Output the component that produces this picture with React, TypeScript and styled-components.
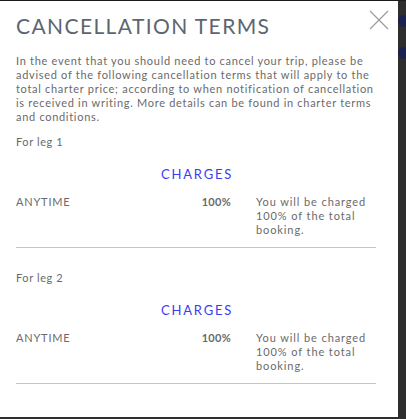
import * as React from 'react';
import { createGlobalStyle, styled } from 'styled-components';

const GlobalStyle = createGlobalStyle`
  html, body {
    margin: 0;
    padding: 0;
    background: #2c2c2c;
    font-family: Lato, "Noto Sans", sans-serif;
  }
`;

const Backdrop = styled.div`
  position: relative;
  width: 406px;
  height: 419px;
  overflow: hidden;
  background: #2e2e2e;
  border-top: 1px solid #1e1a18;
  box-sizing: border-box;
`;

const SideButton = styled.span<{ $top: number }>`
  position: absolute;
  left: 398px;
  top: ${(p) => p.$top}px;
  width: 10px;
  height: 12px;
  border-radius: 50%;
  background: #1a2250;
`;

const Modal = styled.div`
  position: relative;
  width: 398px;
  height: 416px;
  background: #ffffff;
  box-sizing: border-box;
  padding: 12px 22px 0 16px;
  color: #6a6a6a;
`;

const Title = styled.h1`
  margin: 0;
  font-size: 21px;
  font-weight: 400;
  letter-spacing: 1.4px;
  line-height: 26px;
  color: #5d6670;
`;

const CloseButton = styled.button`
  position: absolute;
  top: 9px;
  right: 9px;
  width: 20px;
  height: 20px;
  padding: 0;
  border: none;
  background: transparent;
  cursor: pointer;
`;

const Intro = styled.p`
  margin: 15px 0 0;
  font-size: 11px;
  line-height: 14px;
  letter-spacing: 0.7px;
  color: #6a6a6a;
`;

const Leg = styled.section`
  margin-top: 11px;
  & + & {
    margin-top: 23px;
  }
`;

const LegLabel = styled.div`
  font-size: 11px;
  line-height: 14px;
  letter-spacing: 0.6px;
  color: #6a6a6a;
`;

const Table = styled.div`
  display: grid;
  grid-template-columns: 120px 70px 120px;
  column-gap: 25px;
  margin-top: 17px;
  padding-bottom: 10px;
  border-bottom: 1.5px solid #c4c4c4;
`;

const Charges = styled.div`
  grid-column: 2;
  text-align: right;
  white-space: nowrap;
  font-size: 13px;
  line-height: 16px;
  letter-spacing: 1.8px;
  margin-right: -1.8px;
  color: #3b3bf0;
  margin-bottom: 13px;
`;

const Cell = styled.div<{ $col?: number; $align?: 'left' | 'right'; $bold?: boolean; $spacing?: number }>`
  grid-column: ${(p) => p.$col ?? 'auto'};
  font-size: 11px;
  line-height: 14px;
  letter-spacing: ${(p) => p.$spacing ?? 0.55}px;
  font-weight: ${(p) => (p.$bold ? 700 : 400)};
  text-align: ${(p) => p.$align ?? 'left'};
  color: #6a6a6a;
`;

const legs = [1, 2];

export default function App() {
  return (
    <>
      <GlobalStyle />
      <Backdrop>
        <SideButton $top={14} />
        <SideButton $top={46} />
        <Modal>
          <Title>CANCELLATION TERMS</Title>
          <CloseButton aria-label="Close">
            <svg width="20" height="20" viewBox="0 0 20 20">
              <path d="M1 1 L19 19 M19 1 L1 19" stroke="#9a9a9a" strokeWidth="1.1" fill="none" />
            </svg>
          </CloseButton>
          <Intro>
            In the event that you should need to cancel your trip, please be advised of the following
            cancellation terms that will apply to the total charter price; according to when notification
            of cancellation is received in writing. More details can be found in charter terms and
            conditions.
          </Intro>
          {legs.map((n) => (
            <Leg key={n}>
              <LegLabel>For leg {n}</LegLabel>
              <Table>
                <Charges>CHARGES</Charges>
                <Cell $col={1} $spacing={0.8}>
                  ANYTIME
                </Cell>
                <Cell $align="right" $bold $spacing={0.3}>
                  100%
                </Cell>
                <Cell $spacing={0.9}>You will be charged 100% of the total booking.</Cell>
              </Table>
            </Leg>
          ))}
        </Modal>
      </Backdrop>
    </>
  );
}
